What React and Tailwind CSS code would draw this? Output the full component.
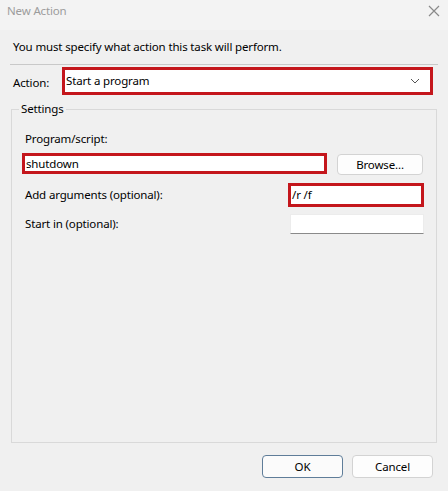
import React from "react";

const FONT = {
  fontFamily: '"Segoe UI", "Noto Sans", "Open Sans", sans-serif',
  letterSpacing: "-0.15px",
};

function Field({ className = "", children }) {
  return (
    <div
      className={`flex items-center bg-white border-[3px] border-[#c4161c] text-[11.5px] text-black ${className}`}
    >
      {children}
    </div>
  );
}

function Button({ children, primary, className = "" }) {
  return (
    <button
      className={`flex items-center justify-center rounded-[4px] border text-[11.5px] text-black ${
        primary ? "border-[#5f7d99] bg-[#fbfbfb]" : "border-[#d3d3d3] bg-[#fdfdfd]"
      } ${className}`}
    >
      {children}
    </button>
  );
}

export default function App() {
  return (
    <div className="w-[448px] h-[491px] bg-[#f0f0f0] overflow-hidden" style={FONT}>
      {/* Title bar */}
      <div className="h-[30px] flex items-start justify-between pt-[3px] bg-[#f3f3f3]">
        <span className="pl-[7px] text-[11.5px] leading-[16px] text-[#9c9c9c]">New Action</span>
        <svg className="mr-[8px] mt-[2px]" width="12" height="12" viewBox="0 0 12 12">
          <path d="M1 1 L11 11 M11 1 L1 11" stroke="#8a8a8a" strokeWidth="1.2" />
        </svg>
      </div>

      <p className="mt-[9px] ml-[13px] text-[11.5px] leading-[16px] text-black">
        You must specify what action this task will perform.
      </p>
      <div className="mt-[9px] mx-[10px] h-px bg-[#c9c9c9]" />

      {/* Action row */}
      <div className="mt-[2px] flex items-center h-[28px]">
        <span className="w-[62px] pl-[13px] pt-[4px] text-[11.5px] text-black">Action:</span>
        <Field className="w-[371px] h-[28px] justify-between pl-[1px] pr-[10px]">
          <span>Start a program</span>
          <svg width="10" height="6" viewBox="0 0 10 6">
            <path d="M1 1 L5 5 L9 1" fill="none" stroke="#555" strokeWidth="1" />
          </svg>
        </Field>
      </div>

      {/* Settings group */}
      <fieldset className="mt-[6px] ml-[11px] w-[426px] h-[342px] border border-[#d9d9d9]">
        <legend className="ml-[7px] px-[2px] text-[11.5px] leading-[16px] text-black">
          Settings
        </legend>
        <div className="mt-[14px] ml-[13px] text-[11.5px] leading-[16px] text-black">
          Program/script:
        </div>
        <div className="mt-[6px] flex items-start">
          <Field className="ml-[10px] w-[305px] h-[21px] pl-[1px]">shutdown</Field>
          <Button className="ml-[10px] mt-px w-[86px] h-[21px]">Browse...</Button>
        </div>
        <div className="mt-[8px] flex items-center">
          <span className="w-[276px] pl-[13px] text-[11.5px] text-black">
            Add arguments (optional):
          </span>
          <Field className="w-[136px] h-[24px] pl-[1px]">/r /f</Field>
        </div>
        <div className="mt-[7px] flex items-center">
          <span className="w-[278px] pl-[13px] text-[11.5px] text-black">
            Start in (optional):
          </span>
          <div className="w-[134px] h-[20px] bg-white border border-[#ececec] border-b-[#8a8a8a]" />
        </div>
      </fieldset>

      {/* Footer buttons */}
      <div className="mt-[12px] flex justify-end gap-[9px] pr-[15px]">
        <Button primary className="w-[81px] h-[23px]">OK</Button>
        <Button className="w-[81px] h-[23px]">Cancel</Button>
      </div>
    </div>
  );
}
